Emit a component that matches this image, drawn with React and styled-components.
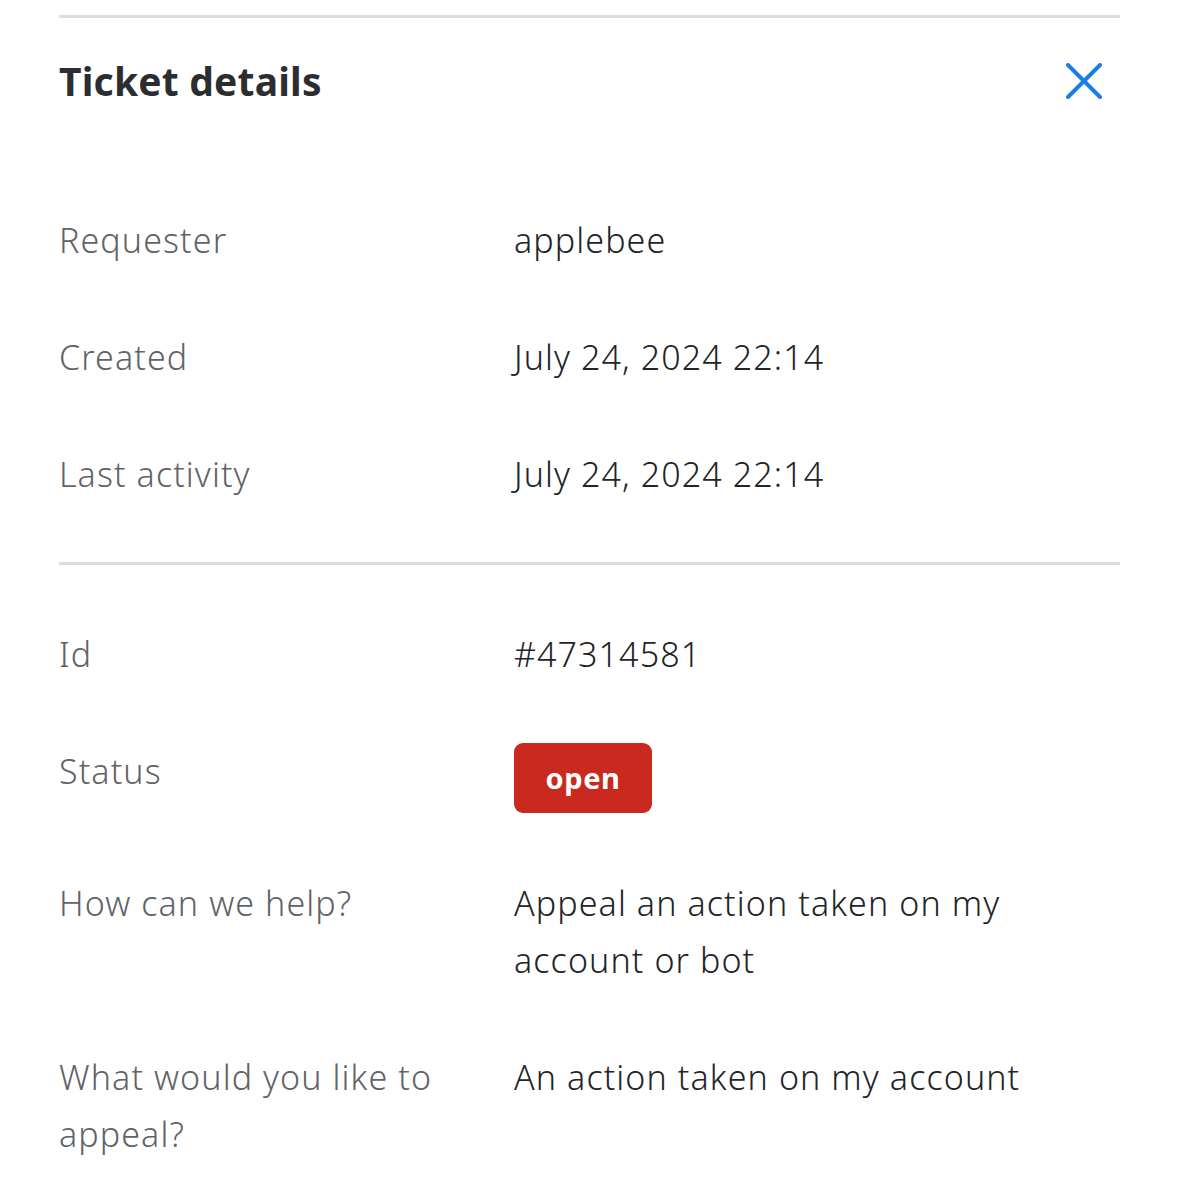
import React from "react";
import styled, { createGlobalStyle } from "styled-components";

const GlobalStyle = createGlobalStyle`
  html, body {
    margin: 0;
    padding: 0;
    background: #ffffff;
  }
  body {
    font-family: "Noto Sans", "Open Sans", sans-serif;
    -webkit-font-smoothing: antialiased;
  }
`;

const Panel = styled.div`
  width: 1061px;
  margin-left: 59px;
  padding-top: 15px;
  color: #2e3035;
`;

const Rule = styled.hr`
  border: none;
  height: 3px;
  background: #dcdddf;
  margin: ${(p) => p.$margin || "0"};
`;

const Header = styled.div`
  display: flex;
  align-items: center;
  justify-content: space-between;
  margin-top: 38px;
  height: 50px;
`;

const Title = styled.h2`
  margin: 0;
  font-size: 39px;
  font-weight: 700;
  line-height: 50px;
  color: #2b2d31;
  letter-spacing: 0.2px;
`;

const CloseButton = styled.button`
  border: none;
  background: none;
  padding: 0;
  width: 36px;
  height: 36px;
  margin-right: 18px;
  display: flex;
  align-items: center;
  justify-content: center;
  cursor: pointer;
`;

const Section = styled.div`
  display: flex;
  flex-direction: column;
  gap: 60px;
  padding-top: ${(p) => p.$top || "0"};
`;

const Row = styled.div`
  display: grid;
  grid-template-columns: 455px 1fr;
  align-items: start;
  font-size: 34px;
  line-height: 57px;
  letter-spacing: 1.1px;
`;

const Label = styled.div`
  color: #616368;
  font-weight: 300;
`;

const Value = styled.div`
  color: #222428;
  font-weight: 300;
`;

const BadgeCell = styled.div`
  display: flex;
  align-items: flex-start;
  padding: 0 0 2px;
`;

const Badge = styled.span`
  display: flex;
  align-items: center;
  justify-content: center;
  width: 138px;
  height: 70px;
  border-radius: 9px;
  background: #c9291f;
  color: #ffffff;
  font-size: 29px;
  font-weight: 700;
  letter-spacing: 0.6px;
  line-height: 1;
  padding-bottom: 2px;
  box-sizing: border-box;
`;

const CloseIcon = () => (
  <svg width="36" height="36" viewBox="0 0 36 36" fill="none">
    <path
      d="M2 2 L34 34 M34 2 L2 34"
      stroke="#1b7ee4"
      strokeWidth="4"
      strokeLinecap="round"
    />
  </svg>
);

const top = [
  ["Requester", "applebee"],
  ["Created", "July 24, 2024 22:14"],
  ["Last activity", "July 24, 2024 22:14"],
];

export default function App() {
  return (
    <>
      <GlobalStyle />
      <Panel>
        <Rule />
        <Header>
          <Title>Ticket details</Title>
          <CloseButton aria-label="Close">
            <CloseIcon />
          </CloseButton>
        </Header>
        <Section $top="106px">
          {top.map(([l, v]) => (
            <Row key={l}>
              <Label>{l}</Label>
              <Value>{v}</Value>
            </Row>
          ))}
        </Section>
        <Rule $margin="59px 0 0" />
        <Section $top="61px">
          <Row>
            <Label>Id</Label>
            <Value>#47314581</Value>
          </Row>
          <Row>
            <Label>Status</Label>
            <BadgeCell>
              <Badge>open</Badge>
            </BadgeCell>
          </Row>
          <Row>
            <Label>How can we help?</Label>
            <Value>Appeal an action taken on my account or bot</Value>
          </Row>
          <Row>
            <Label>What would you like to appeal?</Label>
            <Value>An action taken on my account</Value>
          </Row>
        </Section>
      </Panel>
    </>
  );
}
